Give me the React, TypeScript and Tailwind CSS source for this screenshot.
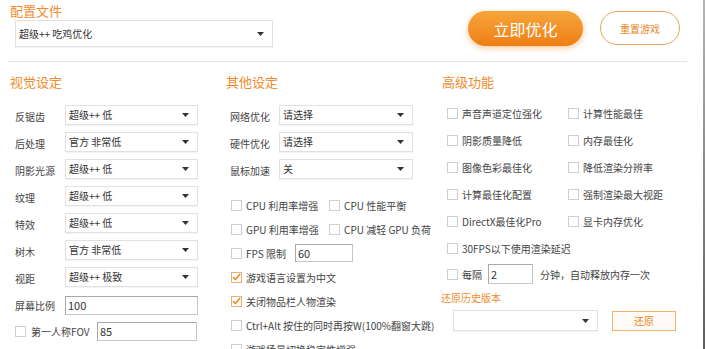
import React from 'react';

const font = { fontFamily: '"Noto Sans CJK SC", "Noto Sans", sans-serif' };

function Arrow() {
  return (
    <svg width="7" height="4" viewBox="0 0 7 4" className="shrink-0">
      <path d="M0 0 L7 0 L3.5 4 Z" fill="#333" />
    </svg>
  );
}

function Select({ value, w, h = 'h-[20px]' }: { value: string; w: string; h?: string }) {
  return (
    <div className={`${w} ${h} flex items-center justify-between border border-[#e1e1e1] bg-white pl-[3px] pr-[8px] text-[10px] text-[#333] shadow-[0_1px_1px_rgba(0,0,0,0.04)]`}>
      <span className="leading-none">{value}</span>
      <Arrow />
    </div>
  );
}

function Input({ value, w, h = 'h-[19px]' }: { value: string; w: string; h?: string }) {
  return (
    <div className={`${w} ${h} flex items-center border border-[#c6c6c6] border-t-[#a9a9a9] border-l-[#a9a9a9] bg-white pl-[2px] text-[11px] text-[#333]`}>
      {value}
    </div>
  );
}

function Check({ checked = false }: { checked?: boolean }) {
  return (
    <div className={`w-[11px] h-[11px] shrink-0 border bg-white flex items-center justify-center ${checked ? 'border-[#e3b07c]' : 'border-[#cfcfcf]'}`}>
      {checked && (
        <svg width="9" height="8" viewBox="0 0 9 8">
          <path d="M1 4 L3.5 6.5 L8 1" fill="none" stroke="#ee8a2a" strokeWidth="1.6" />
        </svg>
      )}
    </div>
  );
}

function CheckItem({ label, checked, w }: { label: string; checked?: boolean; w?: string }) {
  return (
    <div className={`flex items-center gap-[4px] ${w ?? ''}`}>
      <Check checked={checked} />
      <span className="text-[10px] text-[#444] whitespace-nowrap">{label}</span>
    </div>
  );
}

const visual = [
  ['反锯齿', '超级++ 低'],
  ['后处理', '官方 非常低'],
  ['阴影光源', '超级++ 低'],
  ['纹理', '超级++ 低'],
  ['特效', '超级++ 低'],
  ['树木', '官方 非常低'],
  ['视距', '超级++ 极致'],
];

const other = [
  ['网络优化', '请选择'],
  ['硬件优化', '请选择'],
  ['鼠标加速', '关'],
];

const advanced = [
  ['声音声道定位强化', '计算性能最佳'],
  ['阴影质量降低', '内存最佳化'],
  ['图像色彩最佳化', '降低渲染分辨率'],
  ['计算最佳化配置', '强制渲染最大视距'],
  ['DirectX最佳化Pro', '显卡内存优化'],
];

export default function App() {
  return (
    <div className="w-[705px] h-[349px] flex overflow-hidden bg-white" style={font}>
      <div className="flex-1">
        <div className="flex pl-[10px] pt-[2px] h-[61px]">
          <div className="w-[458px]">
            <div className="h-[17px] text-[13px] leading-[17px] text-[#ef8b2c]">配置文件</div>
            <div className="mt-[1px] ml-[5px]">
              <Select value="超级++ 吃鸡优化" w="w-[258px]" h="h-[27px]" />
            </div>
          </div>
          <div className="flex items-start mt-[9px] gap-[17px]">
            <button className="w-[115px] h-[35px] rounded-full bg-gradient-to-b from-[#f6a53a] to-[#ee7e12] text-white text-[16px] shadow-[0_2px_6px_rgba(240,130,30,0.45)]">
              立即优化
            </button>
            <button className="w-[80px] h-[34px] rounded-full border border-[#efa560] bg-white text-[#e8862a] text-[10px]">
              重置游戏
            </button>
          </div>
        </div>
        <div className="ml-[8px] w-[679px] h-px bg-[#e6e6e6]" />

        <div className="flex pt-[11px]">
          {/* 视觉设定 */}
          <div className="w-[226px] pl-[10px]">
            <div className="h-[18px] text-[13px] leading-[18px] text-[#ef8b2c]">视觉设定</div>
            <div className="pl-[5px] mt-[14px] flex flex-col gap-[7px]">
              {visual.map(([label, value]) => (
                <div key={label} className="flex items-center h-[20px]">
                  <span className="w-[50px] text-[10px] text-[#444] pt-[3px]">{label}</span>
                  <Select value={value} w="w-[133px]" />
                </div>
              ))}
              <div className="flex items-center h-[19px] mt-[2px]">
                <span className="w-[50px] text-[10px] text-[#444]">屏幕比例</span>
                <Input value="100" w="w-[133px]" />
              </div>
              <div className="flex items-center h-[19px]">
                <Check />
                <span className="ml-[5px] w-[66px] text-[10px] text-[#444]">第一人称FOV</span>
                <Input value="85" w="w-[100px]" />
              </div>
            </div>
          </div>

          {/* 其他设定 */}
          <div className="w-[216px]">
            <div className="h-[18px] text-[13px] leading-[18px] text-[#ef8b2c]">其他设定</div>
            <div className="pl-[4px] mt-[14px] flex flex-col gap-[7px]">
              {other.map(([label, value]) => (
                <div key={label} className="flex items-center h-[20px]">
                  <span className="w-[49px] text-[10px] text-[#444] pt-[3px]">{label}</span>
                  <Select value={value} w="w-[134px]" />
                </div>
              ))}
            </div>
            <div className="pl-[5px] mt-[16px] flex flex-col gap-[4px]">
              <div className="flex items-center h-[20px]">
                <CheckItem label="CPU 利用率增强" w="w-[98px]" />
                <CheckItem label="CPU 性能平衡" />
              </div>
              <div className="flex items-center h-[20px]">
                <CheckItem label="GPU 利用率增强" w="w-[98px]" />
                <CheckItem label="CPU 减轻 GPU 负荷" />
              </div>
              <div className="flex items-center h-[20px]">
                <CheckItem label="FPS 限制" w="w-[64px]" />
                <Input value="60" w="w-[58px]" h="h-[18px]" />
              </div>
              <div className="flex items-center h-[20px]">
                <CheckItem label="游戏语言设置为中文" checked />
              </div>
              <div className="flex items-center h-[20px]">
                <CheckItem label="关闭物品栏人物渲染" checked />
              </div>
              <div className="flex items-center h-[20px]">
                <CheckItem label="Ctrl+Alt 按住的同时再按W(100%翻窗大跳)" />
              </div>
              <div className="flex items-center h-[20px]">
                <CheckItem label="游戏场景切换稳定性增强" />
              </div>
            </div>
          </div>

          {/* 高级功能 */}
          <div className="flex-1">
            <div className="h-[18px] text-[13px] leading-[18px] text-[#ef8b2c]">高级功能</div>
            <div className="pl-[5px] mt-[12px] flex flex-col gap-[7px]">
              {advanced.map(([a, b]) => (
                <div key={a} className="flex items-center h-[20px]">
                  <CheckItem label={a} w="w-[121px]" />
                  <CheckItem label={b} />
                </div>
              ))}
              <div className="flex items-center h-[20px]">
                <CheckItem label="30FPS以下使用渲染延迟" />
              </div>
              <div className="flex items-center h-[20px] -mt-[1px]">
                <CheckItem label="每隔" w="w-[41px]" />
                <Input value="2" w="w-[45px]" h="h-[20px]" />
                <span className="ml-[7px] text-[10px] text-[#444]">分钟，自动释放内存一次</span>
              </div>
            </div>
            <div className="-ml-[1px] mt-[7px] h-[14px] text-[10px] leading-[14px] text-[#ef8b2c]">还原历史版本</div>
            <div className="flex items-center mt-[5px] pl-[11px]">
              <Select value="" w="w-[145px]" h="h-[21px]" />
              <button className="ml-[14px] w-[64px] h-[20px] border border-[#f0b46a] bg-[#fffbf4] text-[10px] text-[#e8862a]">
                还原
              </button>
            </div>
          </div>
        </div>
      </div>
      <div className="w-[2px] h-full bg-gradient-to-b from-[#b5b5b5] to-[#5e5e5e]" />
    </div>
  );
}
